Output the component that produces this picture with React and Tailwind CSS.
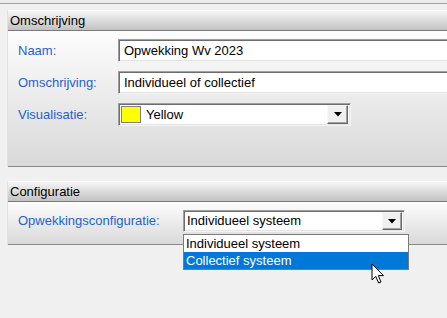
import React from "react";

function Sunken({ className = "", children }) {
  return (
    <div
      className={`flex items-center bg-white border border-t-[#a0a0a0] border-l-[#a0a0a0] border-r-[#f4f4f4] border-b-[#f4f4f4] shadow-[inset_1px_1px_0_#6d6d6d,inset_-1px_-1px_0_#e3e3e3] ${className}`}
    >
      {children}
    </div>
  );
}

function DropButton({ className = "" }) {
  return (
    <div
      className={`flex items-center justify-center bg-[#f0f0f0] border border-t-[#f8f8f8] border-l-[#f8f8f8] border-r-[#696969] border-b-[#696969] shadow-[inset_-1px_-1px_0_#a0a0a0] ${className}`}
    >
      <svg width="8" height="5" viewBox="0 0 8 5">
        <polygon points="0,0 8,0 4,4.5" fill="#000" />
      </svg>
    </div>
  );
}

function Header({ children }) {
  return (
    <div className="h-[21px] border-t border-t-[#fdfdfd] border-b border-b-[#7a7a7a] bg-gradient-to-b from-[#f6f6f6] to-[#c2c2c2] flex items-center pl-[2px] text-[13px] text-black leading-none">
      {children}
    </div>
  );
}

export default function App() {
  return (
    <div
      className="w-[447px] h-[318px] overflow-hidden bg-[#f0f0f0] relative text-[13px]"
      style={{ fontFamily: '"Liberation Sans", Arial, sans-serif' }}
    >
      <div className="h-[3px] bg-[#ececec]" />
      <div className="h-px bg-[#8fa3bd]" />

      {/* Panel 1 */}
      <div className="mt-[6px] ml-[7px] w-[460px] border-l border-l-[#e2e2e2]">
        <Header>Omschrijving</Header>
        <div className="h-[136px] bg-gradient-to-b from-[#fdfdfd] to-[#d9d9d9] border-b border-b-[#8a8a8a] pt-[8px] pl-[10px] flex flex-col gap-[9px]">
          <div className="flex items-center">
            <div className="w-[100px] text-[#1f62d0]">Naam:</div>
            <Sunken className="h-[23px] flex-1 pl-[5px]">
              <span className="text-black">Opwekking Wv 2023</span>
            </Sunken>
          </div>
          <div className="flex items-center">
            <div className="w-[100px] text-[#1f62d0]">Omschrijving:</div>
            <Sunken className="h-[23px] flex-1 pl-[5px]">
              <span className="text-black">Individueel of collectief</span>
            </Sunken>
          </div>
          <div className="flex items-center">
            <div className="w-[100px] text-[#1f62d0]">Visualisatie:</div>
            <Sunken className="h-[23px] w-[233px] pl-[2px] pr-[2px]">
              <div className="w-[20px] h-[17px] bg-[#ffff00] border border-[#808080]" />
              <span className="ml-[5px] flex-1 text-black">Yellow</span>
              <DropButton className="w-[21px] h-[19px]" />
            </Sunken>
          </div>
        </div>
      </div>

      {/* Panel 2 */}
      <div className="mt-[14px] ml-[7px] w-[460px] border-l border-l-[#e2e2e2]">
        <Header>Configuratie</Header>
        <div className="h-[43px] bg-gradient-to-b from-[#fdfdfd] to-[#d9d9d9] border-b border-b-[#8a8a8a] pt-[8px] pl-[10px] flex">
          <div className="flex items-start">
            <div className="w-[165px] h-[22px] flex items-center text-[#1f62d0]">
              Opwekkingsconfiguratie:
            </div>
            <Sunken className="h-[22px] w-[222px] pl-[3px] pr-[2px]">
              <span className="flex-1 text-black">Individueel systeem</span>
              <DropButton className="w-[20px] h-[18px]" />
            </Sunken>
          </div>
        </div>
      </div>

      {/* Dropdown list */}
      <div className="absolute left-[183px] top-[234px] w-[226px] bg-white border border-[#7a7a7a] flex flex-col">
        <div className="h-[17px] pl-[2px] flex items-center text-black">Individueel systeem</div>
        <div className="h-[17px] pl-[2px] flex items-center text-white bg-[#0078d7]">Collectief systeem</div>
      </div>

      {/* Cursor */}
      <svg
        className="absolute left-[371px] top-[263px]"
        width="14"
        height="22"
        viewBox="0 0 14 22"
      >
        <path
          d="M1 1 L1 17 L4.8 13.4 L7.6 20 L10 19 L7.3 12.6 L12.5 12.6 Z"
          fill="#fff"
          stroke="#000"
          strokeWidth="1"
          strokeLinejoin="miter"
        />
      </svg>
    </div>
  );
}
